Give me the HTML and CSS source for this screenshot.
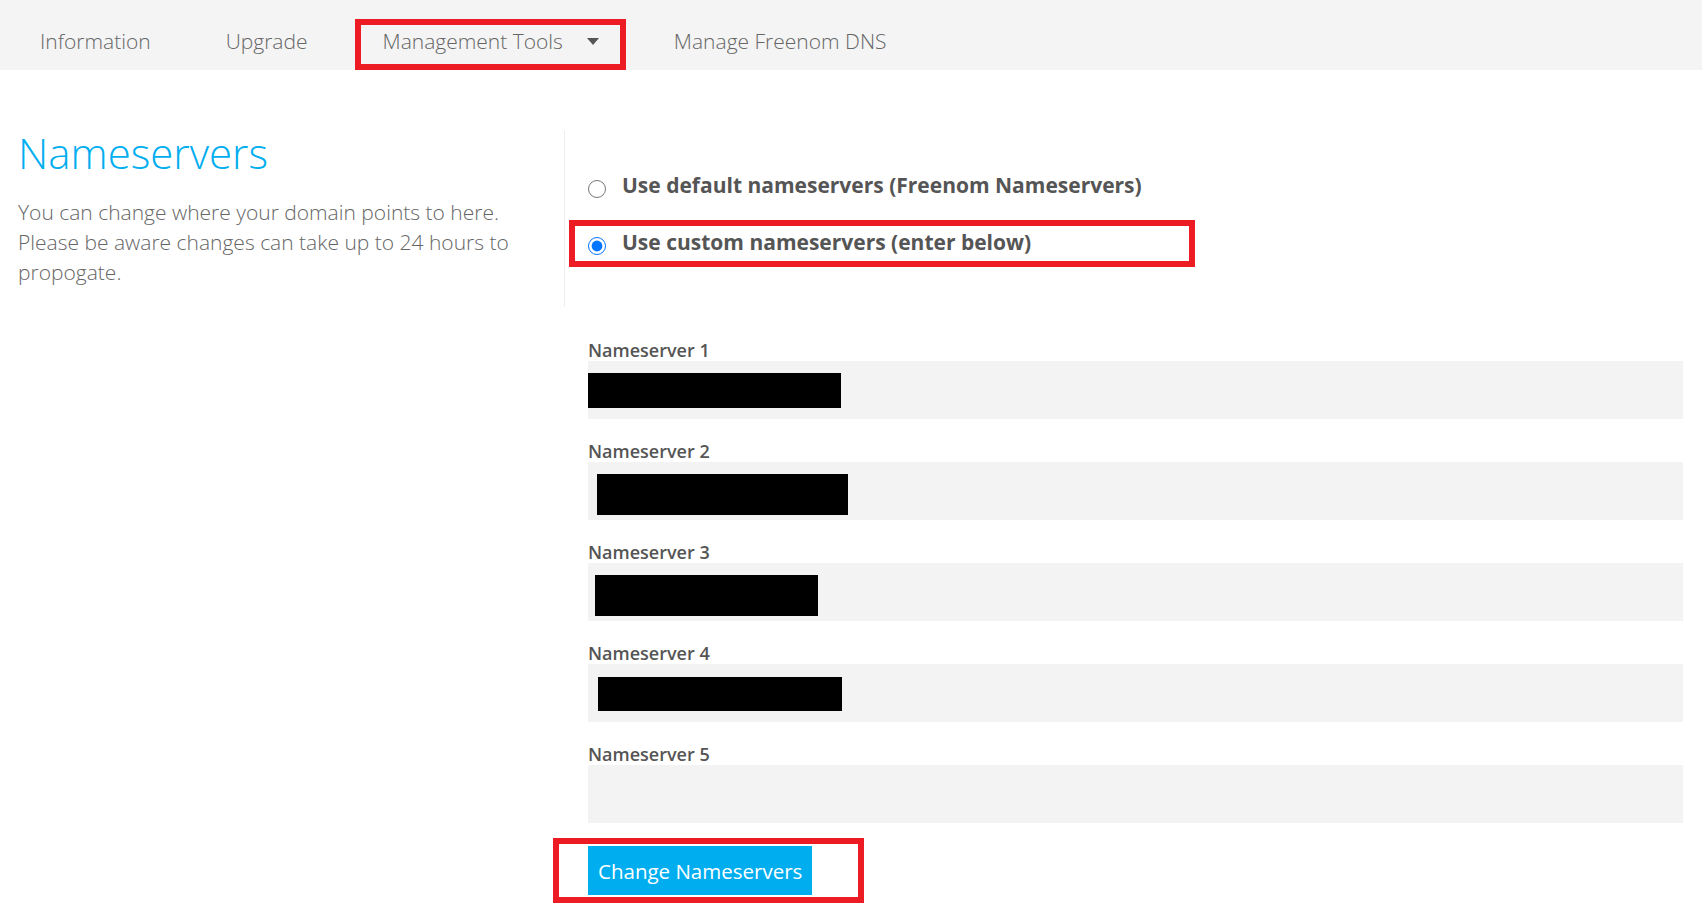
FILE: index.html
```html
<!DOCTYPE html>
<html lang="en">
  <head>
    <meta charset="UTF-8" />
    <meta name="viewport" content="width=device-width, initial-scale=1.0" />
    <title>Nameservers</title>
    <link rel="stylesheet" href="styles.css">
  </head>
  <body>
    <nav class="tabs">
      <a class="tab" href="#">Information</a>
      <a class="tab" href="#">Upgrade</a>
      <a class="tab tab-dropdown marked" href="#">Management Tools <span class="caret"></span></a>
      <a class="tab" href="#">Manage Freenom DNS</a>
    </nav>

    <main class="content">
      <div class="intro">
        <h1 class="title">Nameservers</h1>
        <p class="lead">You can change where your domain points to here. Please be aware changes can take up to 24 hours to propogate.</p>
      </div>

      <div class="options">
        <label class="option">
          <input type="radio" name="nsmode" value="default">
          Use default nameservers (Freenom Nameservers)
        </label>
        <label class="option marked">
          <input type="radio" name="nsmode" value="custom" checked>
          Use custom nameservers (enter below)
        </label>
      </div>

      <form class="fields" onsubmit="return false;">
        <div class="field">
          <label class="field-label">Nameserver 1</label>
          <div class="field-input"><span class="redact redact-1"></span></div>
        </div>
        <div class="field">
          <label class="field-label">Nameserver 2</label>
          <div class="field-input"><span class="redact redact-2"></span></div>
        </div>
        <div class="field">
          <label class="field-label">Nameserver 3</label>
          <div class="field-input"><span class="redact redact-3"></span></div>
        </div>
        <div class="field">
          <label class="field-label">Nameserver 4</label>
          <div class="field-input"><span class="redact redact-4"></span></div>
        </div>
        <div class="field">
          <label class="field-label">Nameserver 5</label>
          <div class="field-input"></div>
        </div>
        <div class="actions marked">
          <button class="btn" type="submit">Change Nameservers</button>
        </div>
      </form>
    </main>
  </body>
</html>
```

FILE: styles.css
```css
body {
  margin: 0;
  font-family: "Open Sans", "Liberation Sans", sans-serif;
  background-color: #ffffff;
  color: #555555;
}

/* top tab bar */
.tabs {
  height: 70px;
  box-sizing: border-box;
  display: flex;
  align-items: center;
  gap: 75px;
  padding: 12px 0 0 40px;
  background-color: #f4f4f4;
}

.tab {
  position: relative;
  display: flex;
  align-items: center;
  font-size: 21px;
  font-weight: 300;
  color: #666666;
  text-decoration: none;
}

.caret {
  width: 0;
  height: 0;
  margin-left: 24px;
  border-left: 6px solid transparent;
  border-right: 6px solid transparent;
  border-top: 7px solid #555555;
}

/* red annotation boxes */
.marked {
  position: relative;
}

.marked::after {
  content: "";
  position: absolute;
  border: 6px solid #ed1c24;
  box-sizing: border-box;
  pointer-events: none;
}

.tab.marked::after {
  top: -8px;
  bottom: -15px;
  left: -28px;
  right: -27px;
}

.option.marked::after {
  top: -7px;
  bottom: -10px;
  left: -19px;
  width: 626px;
}

.actions.marked::after {
  top: -8px;
  bottom: -8px;
  left: -35px;
  right: -52px;
}

/* main area */
.content {
  display: grid;
  grid-template-columns: 564px 1fr;
  padding: 60px 19px 0 0;
}

.intro {
  padding-left: 18px;
  padding-right: 30px;
}

.title {
  margin: 2px 0 0;
  font-size: 42px;
  line-height: 42px;
  font-weight: 300;
  color: #00aeef;
}

.lead {
  margin: 23px 0 0;
  font-size: 21px;
  line-height: 30px;
  font-weight: 300;
  color: #666666;
}

.options {
  border-left: 1px solid #eeeeee;
  padding: 40px 0 50px 23px;
}

.option {
  display: flex;
  align-items: center;
  font-size: 21px;
  line-height: 30px;
  font-weight: 700;
  color: #555555;
}

.option + .option {
  margin-top: 27px;
}

.option input {
  width: 18px;
  height: 18px;
  margin: 8px 16px 0 0;
}

.fields {
  grid-column: 2;
  margin-top: 32px;
  padding-left: 24px;
  padding-bottom: 9px;
}

.field {
  margin-bottom: 21px;
}

.field-label {
  display: block;
  font-size: 18px;
  line-height: 22px;
  font-weight: 600;
  color: #555555;
}

.field-input {
  height: 58px;
  display: flex;
  align-items: flex-start;
  background-color: #f3f3f3;
}

.redact {
  display: block;
  background-color: #000000;
}

.redact-1 { width: 253px; height: 35px; margin: 12px 0 0 0; }
.redact-2 { width: 251px; height: 41px; margin: 12px 0 0 9px; }
.redact-3 { width: 223px; height: 41px; margin: 12px 0 0 7px; }
.redact-4 { width: 244px; height: 34px; margin: 13px 0 0 10px; }

.actions {
  display: inline-flex;
  vertical-align: top;
  margin-top: 2px;
}

.btn {
  display: block;
  height: 49px;
  padding: 0 10px;
  border: none;
  background-color: #00aeef;
  color: #ffffff;
  font-family: "Open Sans", "Liberation Sans", sans-serif;
  font-size: 20.5px;
  cursor: pointer;
}
```
